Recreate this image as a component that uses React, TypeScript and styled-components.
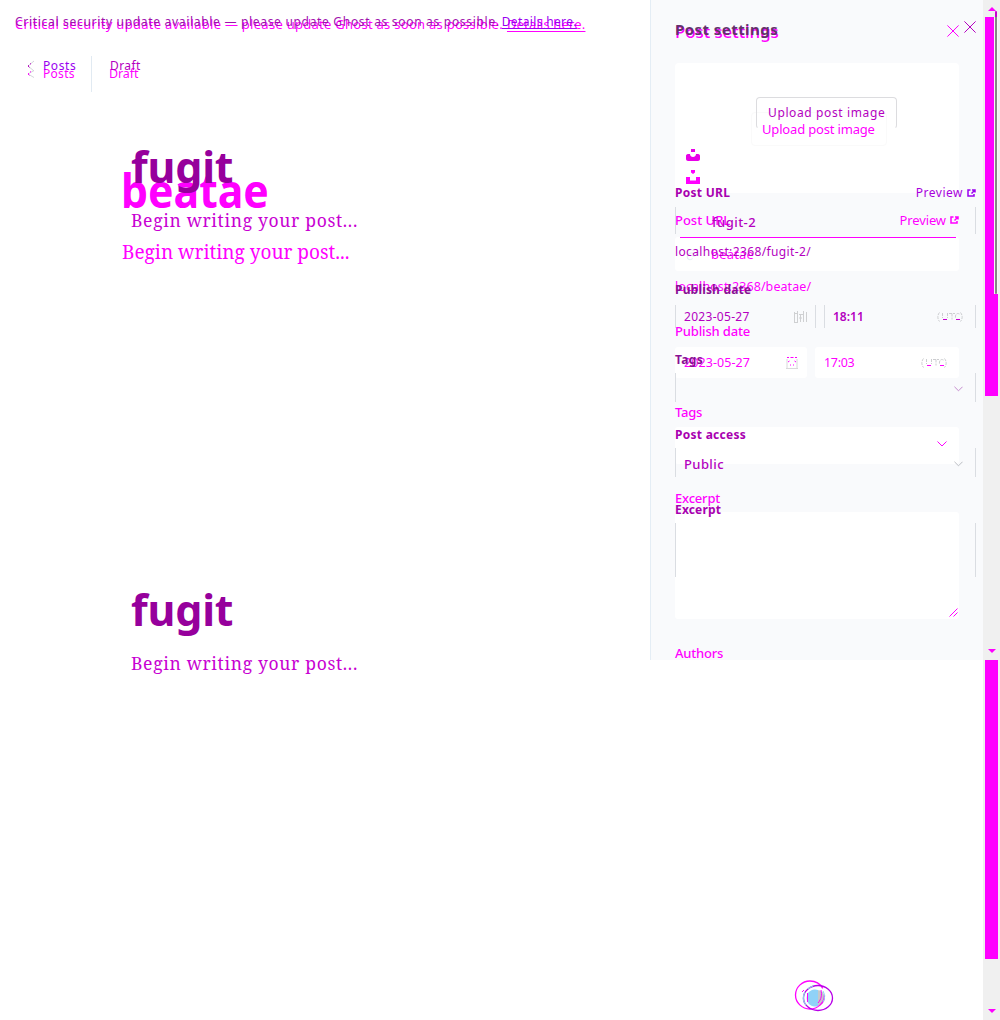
import React from 'react';
import styled, { createGlobalStyle } from 'styled-components';

const MAG = '#ff00ff';
const PURPLE = '#b400c0';
const DEEP = '#96009c';
const LINK = '#9a00f0';

const Global = createGlobalStyle`
  * { box-sizing: border-box; }
  body { margin: 0; background: #fff; overflow: hidden; }
`;

const Stage = styled.div`
  position: relative;
  display: grid;
  grid-template-columns: 983px 17px;
  width: 1000px;
  height: 1020px;
  font-family: 'Noto Sans', 'Open Sans', sans-serif;
  background: #fff;
`;
const Layer = styled.div`
  grid-area: 1 / 1;
  display: grid;
  grid-template-columns: 650px 333px;
  align-items: start;
`;
const Editor = styled.main`
  display: flex;
  flex-direction: column;
`;
const Panel = styled.aside<{ $filled?: boolean }>`
  display: flex;
  flex-direction: column;
  height: 660px;
  width: 333px;
  border-left: 1px solid ${p => (p.$filled ? '#e4edf5' : 'transparent')};
  background: ${p => (p.$filled ? '#f9fafc' : 'transparent')};
  padding-left: 24px;
`;

const Text = styled.span<{ $size?: number; $weight?: number; $ls?: number; $color?: string }>`
  font-size: ${p => p.$size ?? 12}px;
  font-weight: ${p => p.$weight ?? 400};
  letter-spacing: ${p => p.$ls ?? 0}px;
  color: ${p => p.$color ?? PURPLE};
  line-height: 20px;
  white-space: nowrap;
`;
const Banner = styled.div<{ $top: number; $gap: number }>`
  display: flex;
  gap: ${p => p.$gap}px;
  height: 20px;
  margin: ${p => p.$top}px 0 0 15px;
`;
const BannerLink = styled(Text)`
  text-decoration: underline;
  text-underline-offset: 2px;
  text-decoration-thickness: 1px;
`;
const Nav = styled.nav<{ $top: number; $height: number }>`
  display: flex;
  align-items: center;
  height: ${p => p.$height}px;
  margin: ${p => p.$top}px 0 0 27px;
`;
const BackLink = styled.span`
  display: flex;
  align-items: center;
  gap: 8px;
  width: 64px;
`;
const Divider = styled.span<{ $on?: boolean }>`
  width: 1px;
  height: 100%;
  margin-right: ${p => (p.$on ? 17 : 18)}px;
  background: ${p => (p.$on ? '#e1eaf2' : 'transparent')};
`;
const Title = styled.h1<{ $top: number; $left: number; $size: number; $ls: number; $color: string; $height: number; $stretch?: number }>`
  width: max-content;
  margin: ${p => p.$top}px 0 0 ${p => p.$left}px;
  font-size: ${p => p.$size}px;
  font-weight: 700;
  letter-spacing: ${p => p.$ls}px;
  line-height: ${p => p.$height}px;
  color: ${p => p.$color};
  transform: scaleX(${p => p.$stretch ?? 1});
  transform-origin: left;
`;
const Placeholder = styled.p<{ $top: number; $left: number; $size: number; $ls: number; $color: string }>`
  margin: ${p => p.$top}px 0 0 ${p => p.$left}px;
  font-family: 'Noto Serif', 'DejaVu Serif', serif;
  font-size: ${p => p.$size}px;
  letter-spacing: ${p => p.$ls}px;
  line-height: 24px;
  color: ${p => p.$color};
`;

const Row = styled.div<{ $top: number; $width: number; $height?: number }>`
  display: flex;
  justify-content: space-between;
  align-items: center;
  flex: none;
  width: ${p => p.$width}px;
  height: ${p => p.$height ?? 20}px;
  margin-top: ${p => p.$top}px;
`;
const PreviewLink = styled.span`
  display: flex;
  align-items: center;
  gap: 4px;
`;
const Raised = styled.span<{ $by: number }>`
  display: flex;
  padding-bottom: ${p => p.$by * 2}px;
`;
const UploadCard = styled.div`
  width: 284px;
  height: 130px;
  margin-top: 21px;
  flex: none;
  background: #fff;
  border-radius: 4px;
`;
const UploadArea = styled.div`
  width: 301px;
  height: 86px;
  margin-top: 58px;
  flex: none;
`;
const UploadButton = styled.div<{ $outlined?: boolean }>`
  display: flex;
  align-items: center;
  width: ${p => (p.$outlined ? 141 : 136)}px;
  height: ${p => (p.$outlined ? 32 : 34)}px;
  margin-left: ${p => (p.$outlined ? 81 : 76)}px;
  padding-left: ${p => (p.$outlined ? 11 : 10)}px;
  border: 1px solid ${p => (p.$outlined ? '#dcdcdf' : '#fafafa')};
  border-bottom-color: ${p => (p.$outlined ? 'transparent' : '#fafafa')};
  border-radius: 4px;
`;
const UploadInset = styled.div`
  padding-top: 49px;
`;
const SplashSlot = styled.div<{ $top: number }>`
  display: flex;
  margin: ${p => p.$top}px 0 0 11px;
`;
const LineField = styled.div<{ $width?: number; $height: number; $pad?: number }>`
  display: flex;
  align-items: center;
  justify-content: space-between;
  width: ${p => p.$width ?? 301}px;
  height: ${p => p.$height}px;
  padding: ${p => p.$pad ?? 0}px 12px 0 8px;
  border: solid #dadde2;
  border-width: 0 1px;
`;
const FieldRow = styled.div<{ $top: number }>`
  display: flex;
  flex: none;
  gap: 8px;
  margin-top: ${p => p.$top}px;
`;
const DateField = styled(LineField)`
  padding-right: 8px;
`;
const WhiteField = styled.div<{ $width: number; $height: number }>`
  display: flex;
  align-items: center;
  justify-content: space-between;
  width: ${p => p.$width}px;
  height: ${p => p.$height}px;
  padding: 0 12px 0 9px;
  background: #fff;
  border-radius: 3px;
`;
const WhiteDateField = styled(WhiteField)`
  padding-right: 9px;
`;
const UrlField = styled.div`
  width: 284px;
  height: 34px;
  background: #fff;
  border-radius: 3px;
`;
const UrlRule = styled.div`
  height: 1px;
  margin: 0 3px 0 5px;
  background: ${MAG};
`;
const UrlValue = styled.div`
  display: flex;
  align-items: center;
  gap: 12px;
  height: 32px;
  padding-left: 11px;
`;
const UrlSlot = styled.span`
  padding-left: 28px;
  display: flex;
`;
const TextArea = styled(WhiteField)`
  align-items: flex-end;
  justify-content: flex-end;
  padding: 0 1px 2px 0;
`;

const Track = styled.div`
  grid-area: 1 / 2;
  display: flex;
  flex-direction: column;
  align-items: flex-start;
  background: #f0f0f0;
  height: 1020px;
`;
const Arrow = styled.svg<{ $top: number }>`
  flex: none;
  display: block;
  margin: ${p => p.$top}px 0 0 5px;
`;
const Thumb = styled.div<{ $top: number; $height: number }>`
  display: flex;
  justify-content: flex-end;
  flex: none;
  width: 13px;
  height: ${p => p.$height}px;
  margin: ${p => p.$top}px 0 0 2px;
  background: ${MAG};
`;
const InnerTrack = styled.div`
  display: flex;
  justify-content: center;
  width: 4px;
  height: 277px;
  background: #f6f6f6;
`;
const InnerThumb = styled.div`
  width: 2px;
  height: 283px;
  margin-top: -6px;
  border-radius: 1px;
  background: linear-gradient(#c800d0 6px, #858585 6px);
`;
const HelpBadge = styled.svg`
  position: absolute;
  left: 792px;
  top: 976px;
`;

const Cross = ({ color, size = 12 }: { color: string; size?: number }) => (
  <svg width={size} height={size} viewBox="0 0 12 12" fill="none" stroke={color} strokeWidth="1"><path d="M.4.4l11.2 11.2M11.6.4L.4 11.6" /></svg>
);
const Back = ({ color, h }: { color: string; h: number }) => (
  <svg width="8" height="12" viewBox="0 0 8 12" fill="none" strokeWidth="1">
    <path d={`M7 ${6 - h / 2}L1 6l6 ${h / 2}`} stroke="#d3d6da" />
    <path d="M4 3.400L3 4.300M1.800 5.200L1 6l1.500 1.400" stroke={color} />
  </svg>
);
const Chevron = ({ color, w = 10 }: { color: string; w?: number }) => (
  <svg width={w} height="6" viewBox="0 0 10 6" fill="none" stroke={color} strokeWidth="1"><path d="M.5.5L5 5 9.500 .5" /></svg>
);
const External = ({ color }: { color: string }) => (
  <svg width="9" height="8" viewBox="0 0 9 8" fill="none" stroke={color} strokeWidth="1.500"><path d="M3.500 1H1v6h6V5M5 1h3v2.400M8 1L4.500 4.500" /></svg>
);
const Splash = ({ round }: { round?: boolean }) =>
  round ? (
    <svg width="14" height="12" viewBox="0 0 14 12" fill="#e800e8"><path d="M5 0h4v3H5zM2 5h2c0 4 6 4 6 0h2c1.500 0 2 1 2 2v3c0 1-1 2-2 2H2c-1 0-2-1-2-2V7c0-1 .5-2 2-2z" /></svg>
  ) : (
    <svg width="14" height="14" viewBox="0 0 14 14" fill={MAG}><path d="M5 0h4v2.500L7 4 5 2.500zM0 7h4v3l1 1 1-1 1 1 1-1 1 1 1-1V7h4v7H0z" /></svg>
  );
const Calendar = ({ fresh }: { fresh?: boolean }) =>
  fresh ? (
    <svg width="12" height="14" viewBox="0 0 12 14" fill="none" stroke="#d8d8da">
      <path d="M1 3v9M11 3v9M0 12.500h12" />
      <path d="M1 1.500h2M4.500 1.500h3M9 1.500h2M2 6l1.500-1M10 6L8.500 5M4 9h1M7 9h1" stroke={MAG} />
    </svg>
  ) : (
    <svg width="13" height="12" viewBox="0 0 13 12" fill="none" stroke="#cfd0d2">
      <path d="M.5 1v10M12.500 1v10M3.500 0v11M9.500 0v11M1 2.500h3M5 3.500h4M5 7h3M6.500 4v7M0 11.500h4" />
    </svg>
  );
const Chain = () => (
  <svg width="13" height="13" viewBox="0 0 24 24" fill="none" stroke="#e3edf3" strokeWidth="2">
    <path d="M10 13a5 5 0 0 0 7.500.5l3-3a5 5 0 0 0-7-7L12 5M14 11a5 5 0 0 0-7.500-.5l-3 3a5 5 0 0 0 7 7L12 19" />
  </svg>
);
const Zone = ({ bright }: { bright?: boolean }) => (
  <svg width="26" height="10" viewBox="0 0 26 10" fill="none" stroke="#cccdd0">
    <path d="M2.500 .5C.3 3 .3 7 2.500 9.500M5.500 1v5M10.500 1v5M12 1.500h6M15 1.500v6M23.500 .5c2.200 2.500 2.200 6.500 0 9M22.500 2c-3-1.500-4.500 1-4 4" strokeDasharray="3 1" />
    <path d="M6 7.500h4M19 7.500h4" stroke={bright ? MAG : '#c800d0'} strokeWidth="1" />
  </svg>
);
const Grip = () => (
  <svg width="9" height="9" viewBox="0 0 9 9" fill="none" stroke={MAG}><path d="M.5 8.500l8-8M4.500 8.500l4-4" /></svg>
);

function UpdatedView() {
  return (
    <Layer>
      <Editor>
        <Banner $top={14} $gap={4}>
          <Text $size={13} $ls={0.27} $color={MAG}>Critical security update available — please update Ghost as soon as possible.</Text>
          <BannerLink $size={13} $ls={0.16} $color={MAG}>Details here.</BannerLink>
        </Banner>
        <Nav $top={22} $height={36}>
          <BackLink><Back color={MAG} h={7} /><Text $size={12} $ls={0.3} $color={MAG}>Posts</Text></BackLink>
          <Divider $on />
          <Text $size={12.5} $ls={-0.1} $color={MAG}>Draft</Text>
        </Nav>
        <Title $top={71} $left={121} $size={47} $ls={0} $height={54} $color={MAG} $stretch={0.91}>beatae</Title>
        <Placeholder $top={23} $left={122} $size={19} $ls={0} $color={MAG}>Begin writing your post...</Placeholder>
      </Editor>
      <Panel $filled>
        <Row $top={22} $width={284}><Text $size={17} $weight={500} $ls={-0.1} $color={MAG}>Post settings</Text><Raised $by={1}><Cross color={MAG} /></Raised></Row>
        <UploadCard>
          <UploadInset>
            <UploadButton><Text $size={13} $ls={-0.17} $color={MAG}>Upload post image</Text></UploadButton>
          </UploadInset>
          <SplashSlot $top={24}><Splash /></SplashSlot>
        </UploadCard>
        <Row $top={17} $width={284}>
          <Text $size={13} $weight={500} $color={MAG}>Post URL</Text>
          <PreviewLink><Text $size={13} $ls={-0.1} $color={MAG}>Preview</Text><External color={MAG} /></PreviewLink>
        </Row>
        <FieldRow $top={7}>
          <UrlField><UrlRule /><UrlValue><Chain /><Text $size={13} $ls={0.2} $color={MAG}>beatae</Text></UrlValue></UrlField>
        </FieldRow>
        <Row $top={6} $width={284}><Text $size={12.500} $ls={0.08} $color={MAG}>localhost:2368/beatae/</Text></Row>
        <Row $top={24} $width={284}><Text $size={13} $weight={500} $ls={-0.15} $color={MAG}>Publish date</Text></Row>
        <FieldRow $top={6}>
          <WhiteDateField $width={132} $height={31}><Text $size={12.500} $ls={0.08} $color={MAG}>2023-05-27</Text><Calendar fresh /></WhiteDateField>
          <WhiteField $width={144} $height={31}><Text $size={12.500} $ls={-0.3} $color={MAG}>17:03</Text><Zone bright /></WhiteField>
        </FieldRow>
        <Row $top={24} $width={284}><Text $size={13} $weight={500} $ls={-0.25} $color={MAG}>Tags</Text></Row>
        <FieldRow $top={5}><WhiteField $width={284} $height={37}><span /><Raised $by={1.5}><Chevron color={MAG} /></Raised></WhiteField></FieldRow>
        <Row $top={24} $width={284}><Text $size={13} $weight={500} $ls={-0.2} $color={MAG}>Excerpt</Text></Row>
        <FieldRow $top={4}><TextArea $width={284} $height={107}><Grip /></TextArea></FieldRow>
        <Row $top={24} $width={284}><Text $size={13} $weight={500} $ls={-0.2} $color={MAG}>Authors</Text></Row>
      </Panel>
    </Layer>
  );
}

function BaselineView() {
  return (
    <Layer>
      <Editor>
        <Banner $top={12} $gap={2}>
          <Text $size={12} $ls={0.695} $color="#a010ac">Critical security update available — please update Ghost as soon as possible.</Text>
          <BannerLink $size={12} $ls={0.35} $color={LINK}>Details here.</BannerLink>
        </Banner>
        <Nav $top={24} $height={20}>
          <BackLink><Back color={PURPLE} h={10} /><Text $ls={0.6} $color={LINK}>Posts</Text></BackLink>
          <Divider />
          <Text $size={12} $ls={0.4}>Draft</Text>
        </Nav>
        <Title $top={66} $left={131} $size={43} $ls={-0.2} $height={50} $color={DEEP}>fugit</Title>
        <Placeholder $top={16} $left={131} $size={17.500} $ls={0.67} $color="#c800d2">Begin writing your post...</Placeholder>
        <Title $top={353} $left={131} $size={43} $ls={-0.2} $height={50} $color={DEEP}>fugit</Title>
        <Placeholder $top={16} $left={131} $size={17.500} $ls={0.67} $color="#c800d2">Begin writing your post...</Placeholder>
      </Editor>
      <Panel>
        <Row $top={19} $width={301}><Text $size={15} $weight={700} $ls={0.44} $color="#64306c">Post settings</Text><Raised $by={2}><Cross color={PURPLE} /></Raised></Row>
        <UploadArea>
          <UploadButton $outlined><Text $ls={0.62}>Upload post image</Text></UploadButton>
          <SplashSlot $top={20}><Splash round /></SplashSlot>
        </UploadArea>
        <Row $top={0} $width={301}>
          <Text $weight={700} $ls={0.27} $color="#a800b0">Post URL</Text>
          <PreviewLink><Text $ls={0.5} $color="#a800dc">Preview</Text><External color={LINK} /></PreviewLink>
        </Row>
        <FieldRow $top={4}><LineField $height={27} $pad={3}><UrlSlot><Text $size={13} $weight={500} $ls={0.45}>fugit-2</Text></UrlSlot></LineField></FieldRow>
        <Row $top={8} $width={301}><Text $ls={0.38}>localhost:2368/fugit-2/</Text></Row>
        <Row $top={18} $width={301}><Text $weight={700} $ls={0.18} $color="#8a1094">Publish date</Text></Row>
        <FieldRow $top={5}>
          <DateField $width={141} $height={23}><Text $ls={0.3}>2023-05-27</Text><Calendar /></DateField>
          <LineField $width={152} $height={23}><Text $weight={600}>18:11</Text><Zone /></LineField>
        </FieldRow>
        <Row $top={22} $width={301}><Text $weight={700} $ls={0.3} $color="#8a1094">Tags</Text></Row>
        <FieldRow $top={3}><LineField $height={29} $pad={2}><span /><Chevron color="#c080c8" w={9} /></LineField></FieldRow>
        <Row $top={23} $width={301}><Text $weight={700} $ls={0.27} $color="#a800b0">Post access</Text></Row>
        <FieldRow $top={3}><LineField $height={29} $pad={2}><Text $size={13} $weight={500} $ls={0.4}>Public</Text><Chevron color="#b4b7bc" w={9} /></LineField></FieldRow>
        <Row $top={23} $width={301}><Text $weight={700} $ls={0.17} $color="#a800b0">Excerpt</Text></Row>
        <FieldRow $top={3}><LineField $height={54} /></FieldRow>
      </Panel>
    </Layer>
  );
}

export default function App() {
  return (
    <>
      <Global />
      <Stage>
        <UpdatedView />
        <BaselineView />
        <Track>
          <Arrow $top={7} width="8" height="4" viewBox="0 0 8 4" fill={MAG}><path d="M4 0l4 4H0z" /></Arrow>
          <Thumb $top={6} $height={379}><InnerTrack><InnerThumb /></InnerTrack></Thumb>
          <Arrow $top={253} width="8" height="4" viewBox="0 0 8 4" fill={MAG}><path d="M0 0h8L4 4z" /></Arrow>
          <Thumb $top={7} $height={299} />
          <Arrow $top={50} width="8" height="4" viewBox="0 0 8 4" fill={MAG}><path d="M0 0h8L4 4z" /></Arrow>
        </Track>
        <HelpBadge width="44" height="38" viewBox="0 0 44 38" fill="none">
          <circle cx="25" cy="22" r="8" fill="#c6c8cb" />
          <path d="M26 14a8.500 8.500 0 1 0 0 16z" fill="#90d2f8" />
          <ellipse cx="18" cy="19" rx="14.500" ry="14" stroke={MAG} strokeWidth="1.300" strokeDasharray="82 8" />
          <ellipse cx="26" cy="22" rx="14.500" ry="12.500" stroke="#b800e8" strokeWidth="1.300" />
          <path d="M14 29a14 12.500 0 0 1-1-13M16 13a14 12.500 0 0 1 5-3" stroke="#90c8e8" strokeWidth="1.300" />
          <path d="M29 14c1 5 .5 9-3 13M15.500 17v9M10 16l2-2" stroke={MAG} />
          <path d="M31 15a11 11 0 0 1 0 11" stroke="#90d2f8" />
        </HelpBadge>
      </Stage>
    </>
  );
}
